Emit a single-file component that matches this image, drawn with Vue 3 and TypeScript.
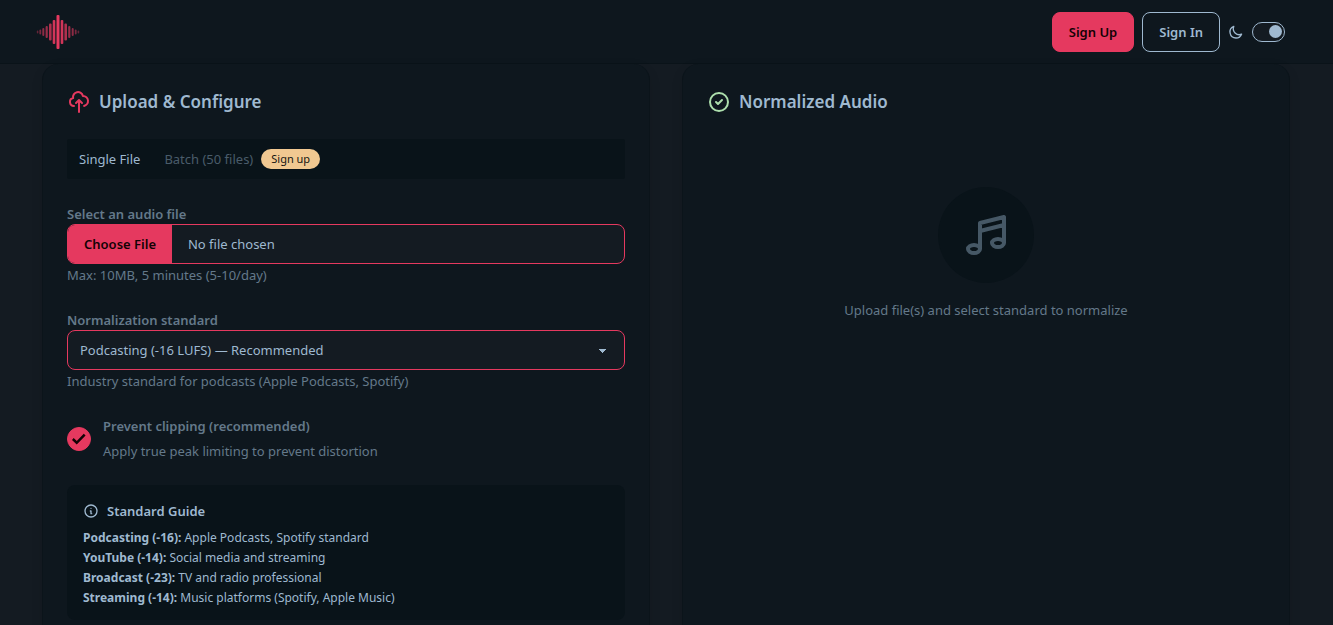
<script setup lang="ts">
import { computed, ref } from 'vue'

interface Standard {
  id: string
  name: string
  level: number
  option: string
  hint: string
  guide: string
}

const standards: Standard[] = [
  { id: 'podcast', name: 'Podcasting', level: -16, option: 'Podcasting (-16 LUFS) — Recommended', hint: 'Industry standard for podcasts (Apple Podcasts, Spotify)', guide: 'Apple Podcasts, Spotify standard' },
  { id: 'youtube', name: 'YouTube', level: -14, option: 'YouTube (-14 LUFS)', hint: 'Social media and streaming', guide: 'Social media and streaming' },
  { id: 'broadcast', name: 'Broadcast', level: -23, option: 'Broadcast (-23 LUFS)', hint: 'TV and radio professional', guide: 'TV and radio professional' },
  { id: 'streaming', name: 'Streaming', level: -14, option: 'Streaming (-14 LUFS)', hint: 'Music platforms (Spotify, Apple Music)', guide: 'Music platforms (Spotify, Apple Music)' },
]

const selected = ref('podcast')
const preventClipping = ref(true)
const dark = ref(true)
const hint = computed(() => standards.find((s) => s.id === selected.value)?.hint ?? '')

// Waveform bars, from the centre outwards; every offset but 0 is mirrored.
const half = [
  { d: 0, h: 34, w: 3, o: 1 },
  { d: 4, h: 24, w: 2.6, o: 0.9 },
  { d: 7.7, h: 17, w: 2.6, o: 0.75 },
  { d: 11.3, h: 12, w: 2.2, o: 0.65 },
  { d: 14.7, h: 8, w: 2, o: 0.6 },
  { d: 17.7, h: 5, w: 1.8, o: 0.5 },
  { d: 20.4, h: 3, w: 1.6, o: 0.4 },
]
const bars = [...half, ...half.slice(1).map((b) => ({ ...b, d: -b.d }))]
</script>

<template>
  <div class="page">
    <header class="navbar">
      <a class="logo" href="#" aria-label="Home">
        <svg width="44" height="36" viewBox="0 0 44 36" fill="#e5395f">
          <rect v-for="b in bars" :key="b.d" :x="22 + b.d - b.w / 2" :y="18 - b.h / 2" :width="b.w" :height="b.h" :opacity="b.o" rx="1" />
        </svg>
      </a>
      <nav class="actions">
        <button class="btn primary" type="button">Sign Up</button>
        <button class="btn outline" type="button">Sign In</button>
        <svg class="moon" viewBox="0 0 24 24" fill="none" stroke="currentColor" stroke-width="2" stroke-linecap="round" stroke-linejoin="round">
          <path d="M20.354 15.354A9 9 0 018.646 3.646 9.003 9.003 0 0012 21a9.003 9.003 0 008.354-5.646z" />
        </svg>
        <input v-model="dark" class="toggle" type="checkbox" aria-label="Dark theme" />
      </nav>
    </header>

    <main class="columns">
      <section class="card">
        <h2 class="title">
          <svg class="icon rose" viewBox="0 0 24 24" fill="none" stroke="currentColor" stroke-width="2" stroke-linecap="round" stroke-linejoin="round">
            <path d="M7 16a4 4 0 01-.88-7.903A5 5 0 1115.9 6L16 6a5 5 0 011 9.9M15 13l-3-3m0 0l-3 3m3-3v12" />
          </svg>
          Upload &amp; Configure
        </h2>

        <div class="tabs" role="tablist">
          <button class="tab active" type="button" role="tab" aria-selected="true">Single File</button>
          <button class="tab" type="button" role="tab" aria-selected="false"><span class="faded">Batch (50 files)</span><span class="badge">Sign up</span></button>
        </div>

        <div class="field">
          <label class="label" for="audio">Select an audio file</label>
          <input id="audio" class="control file" type="file" accept="audio/*" />
          <p class="hint">Max: 10MB, 5 minutes (5-10/day)</p>
        </div>

        <div class="field">
          <label class="label" for="standard">Normalization standard</label>
          <select id="standard" v-model="selected" class="control select">
            <option v-for="s in standards" :key="s.id" :value="s.id">{{ s.option }}</option>
          </select>
          <p class="hint">{{ hint }}</p>
        </div>

        <div class="check-row">
          <input id="clip" v-model="preventClipping" class="checkbox" type="checkbox" />
          <label class="check-text" for="clip">
            <span class="label">Prevent clipping (recommended)</span>
            <span class="check-desc">Apply true peak limiting to prevent distortion</span>
          </label>
        </div>

        <aside class="guide">
          <h3 class="guide-title">
            <svg class="small-icon" viewBox="0 0 24 24" fill="none" stroke="currentColor" stroke-width="2" stroke-linecap="round" stroke-linejoin="round">
              <path d="M13 16h-1v-4h-1m1-4h.01M21 12a9 9 0 11-18 0 9 9 0 0118 0z" />
            </svg>
            Standard Guide
          </h3>
          <p v-for="s in standards" :key="s.id" class="guide-line"><strong>{{ s.name }} ({{ s.level }}):</strong> {{ s.guide }}</p>
        </aside>
      </section>

      <section class="card">
        <h2 class="title">
          <svg class="icon green" viewBox="0 0 24 24" fill="none" stroke="currentColor" stroke-width="2" stroke-linecap="round" stroke-linejoin="round">
            <path d="M9 12l2 2 4-4m6 2a9 9 0 11-18 0 9 9 0 0118 0z" />
          </svg>
          Normalized Audio
        </h2>
        <div class="empty">
          <div class="disc">
            <svg class="note" viewBox="0 0 24 24" fill="none" stroke="currentColor" stroke-width="2" stroke-linecap="round" stroke-linejoin="round">
              <path d="M9 19V6l12-3v13M9 19c0 1.105-1.343 2-3 2s-3-.895-3-2 1.343-2 3-2 3 .895 3 2zm12-3c0 1.105-1.343 2-3 2s-3-.895-3-2 1.343-2 3-2 3 .895 3 2zM9 10l12-3" />
            </svg>
          </div>
          <p class="empty-text">Upload file(s) and select standard to normalize</p>
        </div>
      </section>
    </main>
  </div>
</template>

<style>
body {
  background: #141b22;
}
</style>

<style scoped>
* {
  box-sizing: border-box;
}
.page {
  height: 100vh;
  overflow: hidden;
  display: flex;
  flex-direction: column;
  background: #141b22;
  color: #9fb9d0;
  font-family: "Segoe UI", "Noto Sans", "Open Sans", sans-serif;
  font-size: 13px;
  line-height: 20px;
}
h2, h3, p {
  margin: 0;
}
button, input, select {
  font: inherit;
  color: inherit;
  margin: 0;
}
.navbar {
  flex: none;
  height: 64px;
  padding: 0 48px 0 36px;
  display: flex;
  align-items: center;
  justify-content: space-between;
  background: #0e171e;
  border-bottom: 1px solid #0a1319;
}
.logo, .logo svg {
  display: block;
}
.actions {
  display: flex;
  align-items: center;
  gap: 8px;
}
.btn {
  height: 40px;
  padding: 0 16px;
  border: 1px solid #9fb9d0;
  border-radius: 8px;
  background: transparent;
  font-weight: 600;
}
.btn.primary {
  background: #e5395f;
  border-color: #e5395f;
  color: #130205;
}
.moon, .small-icon {
  width: 16px;
  height: 16px;
}
.toggle {
  appearance: none;
  width: 33px;
  height: 20px;
  padding: 2px;
  border: 1px solid #9fb9d0;
  border-radius: 10px;
  display: flex;
  align-items: center;
  background: #141b22;
}
.toggle::before {
  content: "";
  width: 13px;
  height: 13px;
  border-radius: 50%;
  background: #9fb9d0;
}
.toggle:checked {
  justify-content: flex-end;
}
.columns {
  flex: none;
  width: 100%;
  max-width: 1281px;
  margin: 0 auto;
  padding: 0 17px 32px 16px;
  display: grid;
  grid-template-columns: 1fr 1fr;
  gap: 32px;
}
.card {
  padding: 24px;
  border: 1px solid #0b141a;
  border-top: 0;
  border-radius: 16px;
  background: #0e171e;
  box-shadow: 0 4px 12px rgba(0, 0, 0, 0.1);
}
.title {
  display: flex;
  align-items: center;
  gap: 8px;
  font-size: 17px;
  line-height: 28px;
  font-weight: 600;
}
.icon {
  width: 24px;
  height: 24px;
}
.rose {
  color: #e5395f;
}
.green {
  color: #addfad;
}
.tabs {
  margin: 23px 0 25px;
  height: 40px;
  display: flex;
  background: #091319;
  border-radius: 2px;
}
.tab {
  display: flex;
  align-items: center;
  gap: 8px;
  padding: 0 12px;
  border: 0;
  background: transparent;
}
.faded {
  color: #4a5c6a;
}
.badge {
  height: 20px;
  padding: 0 10px;
  border-radius: 10px;
  background: #f1c891;
  color: #141411;
  font-size: 11px;
}
.field {
  margin-bottom: 25px;
}
.label {
  display: block;
  font-weight: 600;
  color: #64798a;
}
.control {
  display: block;
  width: 100%;
  height: 40px;
  border: 1px solid #e5395f;
  border-radius: 8px;
  background: #141b22;
}
.file {
  overflow: hidden;
  line-height: 38px;
}
.file::file-selector-button {
  height: 38px;
  margin: 0 16px 0 0;
  padding: 0 16px;
  border: 0;
  background: #e5395f;
  color: #130205;
  font: inherit;
  font-weight: 600;
}
.select {
  appearance: none;
  padding: 0 12px;
  background-image: linear-gradient(45deg, transparent 50%, #9fb9d0 50%), linear-gradient(135deg, #9fb9d0 50%, transparent 50%);
  background-position: calc(100% - 21px) 18px, calc(100% - 17px) 18px;
  background-size: 4px 4px;
  background-repeat: no-repeat;
}
.hint {
  margin-top: 1px;
  color: #64798a;
}
.check-row {
  display: flex;
  align-items: center;
  gap: 12px;
  margin-bottom: 24px;
}
.checkbox {
  appearance: none;
  flex: none;
  display: grid;
  width: 24px;
  height: 24px;
  padding: 4px;
  border: 1px solid #e5395f;
  border-radius: 50%;
}
.checkbox:checked {
  background: #e5395f;
}
.checkbox:checked::before {
  content: "";
  background: #130205;
  clip-path: polygon(0 60%, 12% 47%, 34% 68%, 84% 16%, 97% 29%, 34% 92%);
}
.check-text {
  display: grid;
  gap: 5px;
}
.check-desc {
  color: #64798a;
}
.guide {
  padding: 16px 16px 12px;
  border-radius: 8px;
  background: #091319;
}
.guide-title {
  display: flex;
  align-items: center;
  gap: 8px;
  margin-bottom: 7px;
  font-size: 13px;
  line-height: 20px;
  font-weight: 600;
}
.guide-line {
  font-size: 12px;
}
.empty {
  padding: 71px 0;
  display: flex;
  flex-direction: column;
  align-items: center;
  gap: 17px;
}
.disc {
  width: 96px;
  height: 96px;
  border-radius: 50%;
  display: grid;
  place-items: center;
  background: #091319;
}
.note {
  width: 48px;
  height: 48px;
  color: #465866;
}
.empty-text {
  color: #64798a;
}
</style>
